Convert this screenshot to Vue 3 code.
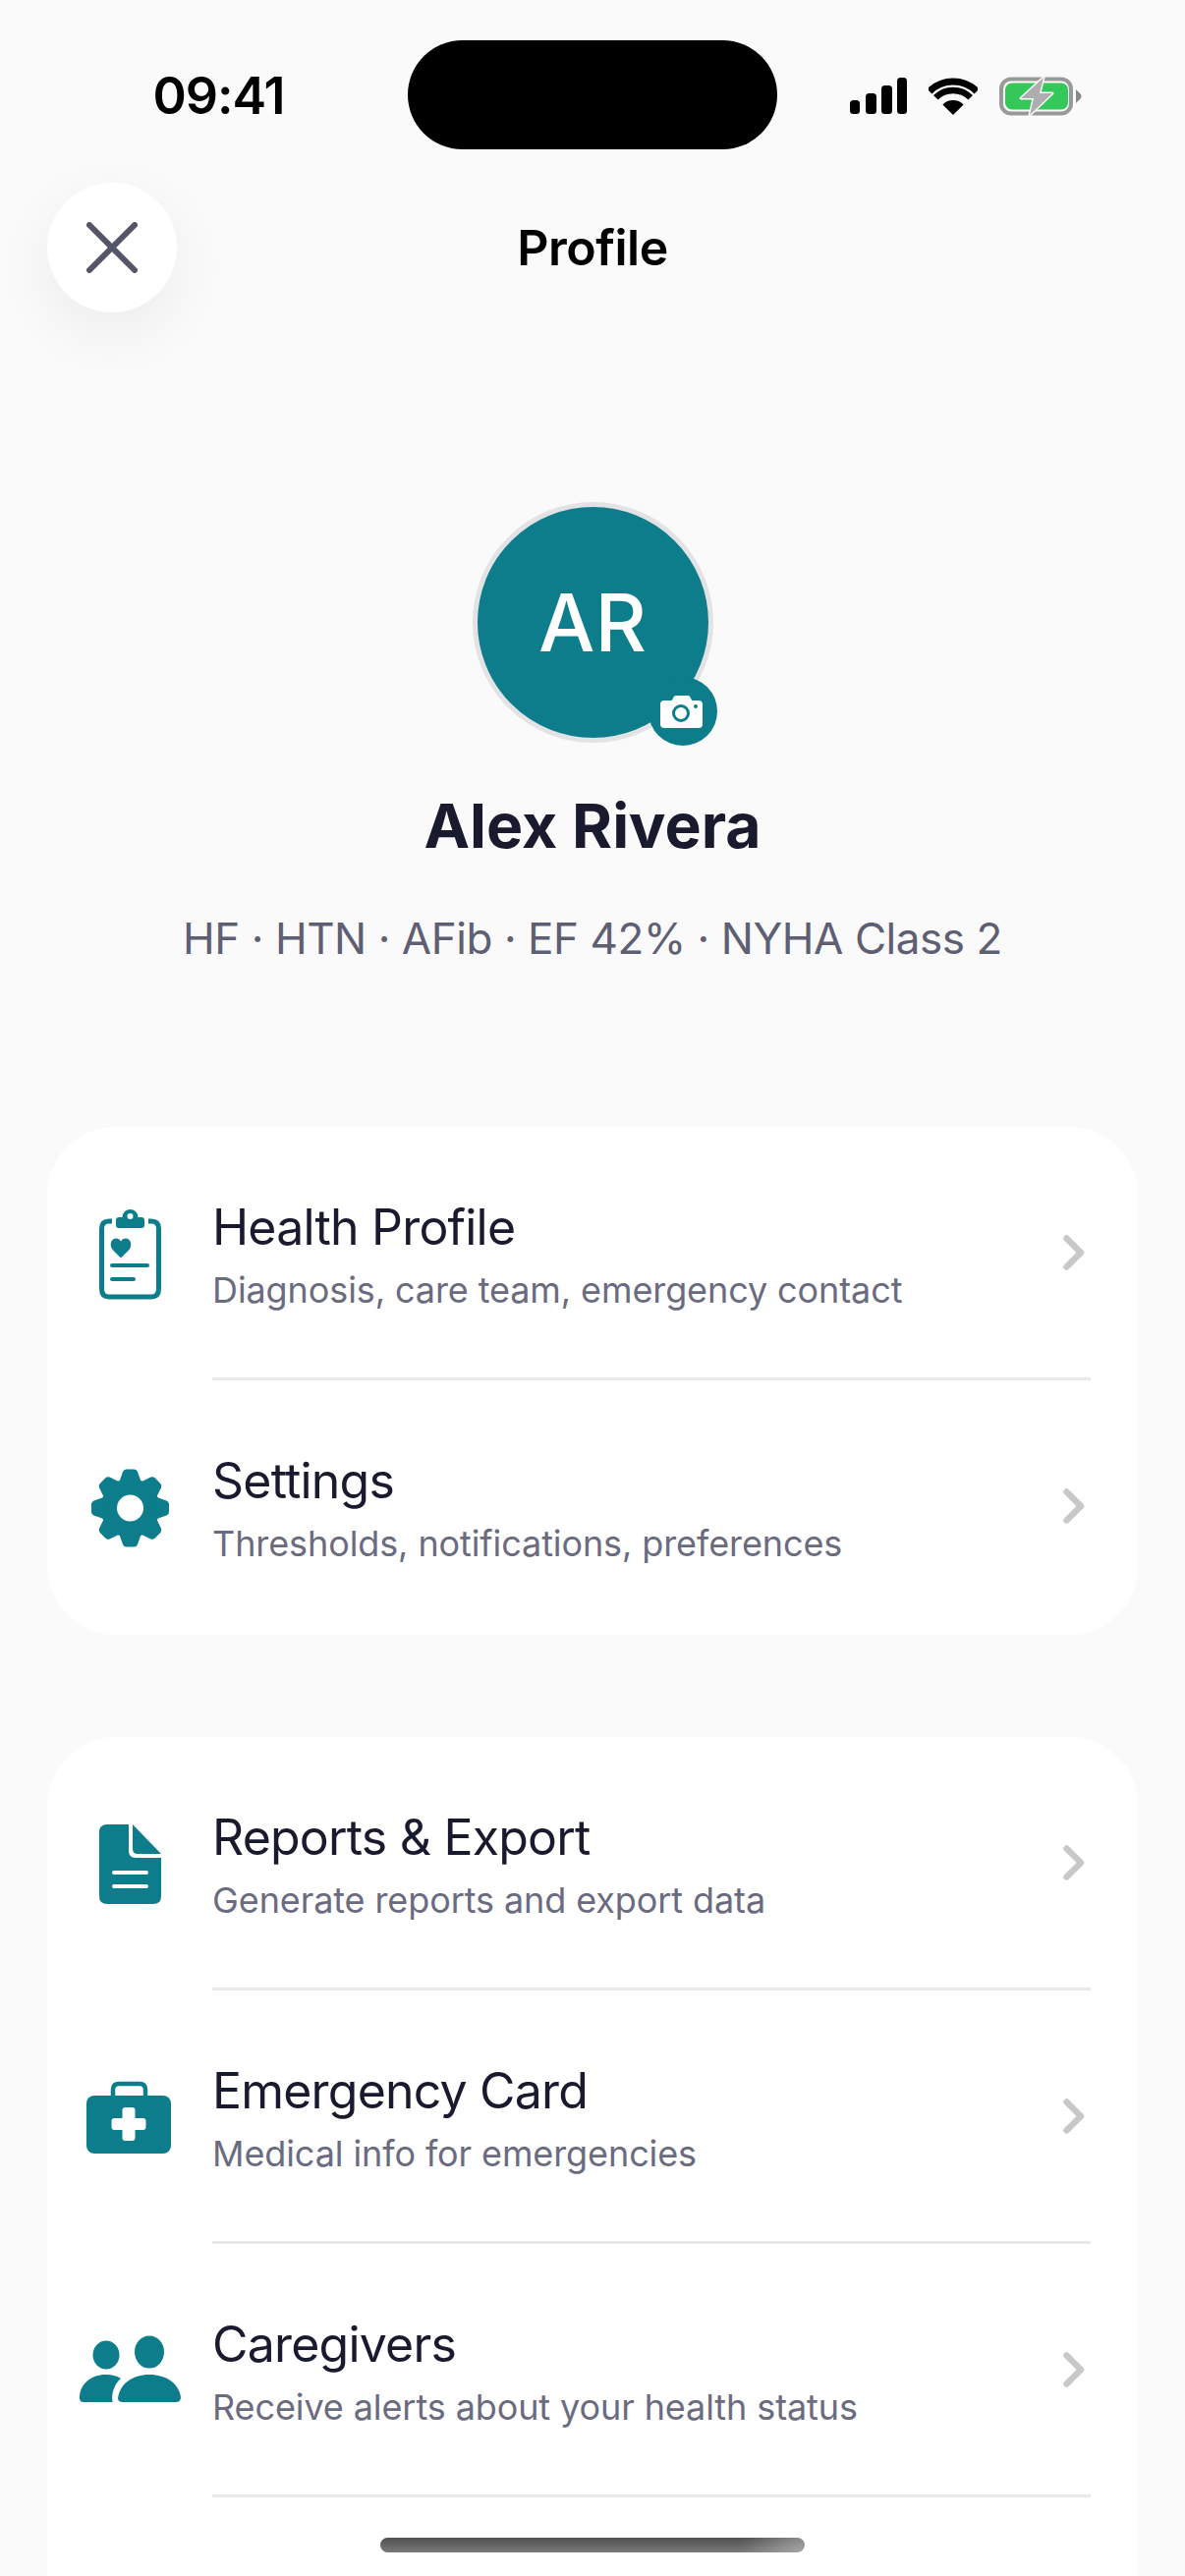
<script setup>
// menu rows, grouped by card
const groups = [
    [
        { icon: 'clipboard', title: 'Health Profile', sub: 'Diagnosis, care team, emergency contact' },
        { icon: 'gear', title: 'Settings', sub: 'Thresholds, notifications, preferences', last: true },
    ],
    [
        { icon: 'doc', title: 'Reports & Export', sub: 'Generate reports and export data' },
        { icon: 'case', title: 'Emergency Card', sub: 'Medical info for emergencies' },
        { icon: 'people', title: 'Caregivers', sub: 'Receive alerts about your health status' },
    ],
]
const teeth = [0, 45, 90, 135, 180, 225, 270, 315]
</script>

<template>
    <div class="page">
        <div class="status">
            <span class="time">09:41</span>
            <div class="island"></div>
            <div class="status-icons">
                <svg width="58" height="37" viewBox="0 0 58 37">
                    <rect x="0" y="23" width="10" height="14" rx="3.5" />
                    <rect x="16" y="16" width="11" height="21" rx="3.5" />
                    <rect x="32" y="8" width="11" height="29" rx="3.5" />
                    <rect x="48" y="0" width="10" height="37" rx="3.5" />
                </svg>
                <svg width="50" height="38" viewBox="0 0 50 38">
                    <path d="M1 14A34 34 0 0 1 49 14" fill="none" stroke="#000" stroke-width="7" />
                    <path d="M7.3 20.3A25 25 0 0 1 42.7 20.3" fill="none" stroke="#000" stroke-width="6.5" />
                    <path d="M25 38L14.4 27.4A15 15 0 0 1 35.6 27.4Z" />
                </svg>
                <svg width="84" height="40" viewBox="0 0 84 40">
                    <rect x="2" y="2.5" width="71" height="35" rx="10" fill="none" stroke="#999" stroke-width="4" />
                    <rect x="6" y="6.5" width="64" height="27" rx="7" fill="#34c759" />
                    <path d="M78 13L83 18Q84 20 83 22L78 27Z" fill="#888" />
                    <path d="M45 1L22 22H35L31 39L54 17H41Z" fill="#aeaeb0" stroke="#fafafa" stroke-width="3" stroke-linejoin="round" paint-order="stroke" />
                </svg>
            </div>
        </div>

        <div class="header">
            <button class="close">
                <svg width="52" height="52" viewBox="0 0 52 52">
                    <path d="M3 3L49 49M49 3L3 49" fill="none" stroke="#55556a" stroke-width="6" stroke-linecap="round" />
                </svg>
            </button>
            <h1 class="title">Profile</h1>
        </div>

        <div class="hero">
            <div class="avatar">
                AR
                <div class="badge">
                    <svg width="70" height="70" viewBox="0 0 70 70">
                        <rect x="12" y="24" width="43" height="28" rx="4" fill="#fff" />
                        <path d="M23 25L26 20Q26.5 19 28 19H40Q41.5 19 42 20L45 25Z" fill="#fff" />
                        <circle cx="33" cy="37" r="7.5" fill="#fff" stroke="#0d7d8c" stroke-width="3" />
                        <circle cx="48" cy="30" r="2" fill="#0d7d8c" />
                    </svg>
                </div>
            </div>
            <div class="name">Alex Rivera</div>
            <div class="tags">HF · HTN · AFib · EF 42% · NYHA Class 2</div>
        </div>

        <div v-for="(rows, g) in groups" :key="g" class="card">
            <div v-for="row in rows" :key="row.title" class="row">
                <div class="row-icon">
                    <svg width="120" height="120" viewBox="0 0 120 120" fill="#0d7d8c">
                        <template v-if="row.icon === 'clipboard'">
                            <path d="M42 27H39Q31.5 27 31.5 34.5V96Q31.5 104 39 104H82Q89.5 104 89.5 96V34.5Q89.5 27 82 27H79" fill="none" stroke="#0d7d8c" stroke-width="5" />
                            <path d="M46 26Q46 23 49 23H52.5A8 8 0 0 1 68.5 23H72Q75 23 75 26V31Q75 34 72 34H49Q46 34 46 31Z" />
                            <circle cx="60.5" cy="22" r="3" fill="#fff" />
                            <path d="M51 64.5L43 56.5C39 52.500 40.500 44.500 46 44.500C48 44.500 50 45.500 51 47.500C52 45.500 54 44.500 56 44.500C61.500 44.500 63 52.500 59 56.500Z" />
                            <path d="M42 72H78M42 86H64" fill="none" stroke="#0d7d8c" stroke-width="4" stroke-linecap="round" />
                        </template>
                        <template v-else-if="row.icon === 'gear'">
                            <g transform="translate(60.5 61)">
                                <circle r="30" />
                                <path v-for="a in teeth" :key="a" :transform="`rotate(${a})`" d="M-11 -27L-7.5 -37Q-6.5 -39.5 -4 -39.5H4Q6.5 -39.5 7.5 -37L11 -27Z" />
                                <circle r="13.5" fill="#fff" />
                            </g>
                        </template>
                        <template v-else-if="row.icon === 'doc'">
                            <g transform="translate(0 1)">
                                <path d="M37 19H59V46Q59 53 66 53H92V92Q92 100 84 100H37Q29 100 29 92V27Q29 19 37 19Z" />
                                <path d="M63 19L92 49H68Q63 49 63 44Z" />
                                <path d="M44 68H77M44 82H77" fill="none" stroke="#fff" stroke-width="4" stroke-linecap="round" />
                            </g>
                        </template>
                        <template v-else-if="row.icon === 'case'">
                            <path d="M43 38V32Q43 26 49 26H70Q76 26 76 32V38" fill="none" stroke="#0d7d8c" stroke-width="4.5" />
                            <rect x="16" y="38" width="86" height="59" rx="8" />
                            <path d="M52.5 53Q52.5 50 55.5 50H62.5Q65.5 50 65.5 53V61H73.5Q76.5 61 76.5 64V70Q76.5 73 73.5 73H65.5V81Q65.5 84 62.5 84H55.5Q52.5 84 52.5 81V73H44.5Q41.5 73 41.5 70V64Q41.5 61 44.5 61H52.5Z" fill="#fff" />
                        </template>
                        <template v-else>
                            <g transform="translate(0 -2)">
                                <ellipse cx="36" cy="46" rx="13.5" ry="14.5" />
                                <ellipse cx="80" cy="43" rx="15" ry="16.5" />
                                <path d="M9 90C9 76 20 66 36 66C42 66 46 67 51 70C45 75 41 84 42.5 94H13Q9 94 9 90Z" />
                                <path d="M48 90C50 75 63 66 80 66C97 66 110 75 112 89Q112 94 107 94H53Q48 94 48 90Z" />
                            </g>
                        </template>
                    </svg>
                </div>
                <div class="row-main" :class="{ last: row.last }">
                    <div class="row-text">
                        <div class="row-title">{{ row.title }}</div>
                        <div class="row-sub">{{ row.sub }}</div>
                    </div>
                    <svg class="chevron" width="24" height="38" viewBox="0 0 24 38">
                        <path d="M5.5 4.5L20 19L5.5 33.5" fill="none" stroke="#c8c8ca" stroke-width="6.5" stroke-linecap="round" stroke-linejoin="round" />
                    </svg>
                </div>
            </div>
        </div>

        <div class="home-bar"></div>
    </div>
</template>

<style scoped>
.page {
    position: relative;
    width: 1206px;
    height: 2622px;
    overflow: hidden;
    background: #fafafa;
    font-family: Inter, "Liberation Sans", sans-serif;
    color: #1a1a2e;
}

.status {
    display: grid;
    grid-template-columns: 415px 376px 1fr;
    align-items: center;
    padding-top: 41px;
}
.time {
    justify-self: center;
    padding-left: 30px;
    margin-top: 2px;
    font-size: 52px;
    font-weight: 600;
    line-height: 1;
    letter-spacing: -1px;
    color: #000;
}
.island {
    height: 111px;
    border-radius: 56px;
    background: #000;
}
.status-icons {
    display: flex;
    align-items: center;
    gap: 22px;
    padding-left: 74px;
    margin-top: 2px;
}
.status-icons svg {
    flex: none;
}

.header {
    display: grid;
    grid-template-columns: 132px 1fr 132px;
    align-items: center;
    margin: 34px 48px 0;
    height: 132px;
}
.close {
    display: flex;
    align-items: center;
    justify-content: center;
    width: 132px;
    height: 132px;
    padding: 0;
    border: none;
    border-radius: 50%;
    background: #fff;
    box-shadow: 0 20px 60px rgba(0, 0, 0, .06);
}
.title {
    margin: 0;
    font-size: 50px;
    font-weight: 600;
    letter-spacing: -.5px;
    text-align: center;
    color: #000;
}

.hero {
    display: flex;
    flex-direction: column;
    align-items: center;
    margin-top: 193px;
}
.avatar {
    position: relative;
    box-sizing: border-box;
    display: flex;
    align-items: center;
    justify-content: center;
    width: 245px;
    height: 245px;
    border: 5px solid #e3e3e5;
    border-radius: 50%;
    background: #0d7d8c;
    font-size: 81px;
    font-weight: 550;
    color: #fff;
}
.badge {
    position: absolute;
    right: -9px;
    bottom: -8px;
    width: 70px;
    height: 70px;
    border-radius: 50%;
    background: #0d7d8c;
}
.badge svg {
    display: block;
}
.name {
    margin-top: 46px;
    font-size: 62.5px;
    line-height: 76px;
    font-weight: 700;
}
.tags {
    margin-top: 50px;
    font-size: 44px;
    line-height: 54px;
    letter-spacing: -.45px;
    color: #5f5f73;
}

.card {
    margin: 0 48px;
    padding-bottom: 1px;
    border-radius: 70px;
    background: #fff;
}
.hero + .card {
    margin-top: 165px;
}
.card + .card {
    margin-top: 104px;
    padding-bottom: 200px;
}

.row {
    display: flex;
    height: 258px;
}
.row-icon {
    flex: none;
    display: flex;
    align-items: center;
    justify-content: center;
    width: 168px;
}
.row-main {
    flex: 1;
    display: flex;
    align-items: center;
    justify-content: space-between;
    margin-right: 48px;
    padding-right: 6px;
    border-bottom: 3px solid #e8e8ea;
}
.row-main.last {
    border-bottom-color: transparent;
}
.row-text {
    padding-top: 6px;
}
.row-title {
    font-size: 50px;
    line-height: 60px;
    letter-spacing: -.8px;
}
.row-sub {
    margin-top: 10px;
    font-size: 36px;
    line-height: 48px;
    letter-spacing: -.1px;
    color: #6b6b80;
}
.chevron {
    flex: none;
}

.home-bar {
    position: absolute;
    left: 387px;
    top: 2583px;
    width: 432px;
    height: 15px;
    border-radius: 8px;
    background: linear-gradient(90deg, rgba(255, 255, 255, 0) 85%, rgba(255, 255, 255, .35) 100%), linear-gradient(180deg, #505050, #7a7a7a);
}
</style>

<style>
html, body {
    margin: 0;
    background: #fafafa;
}
</style>
